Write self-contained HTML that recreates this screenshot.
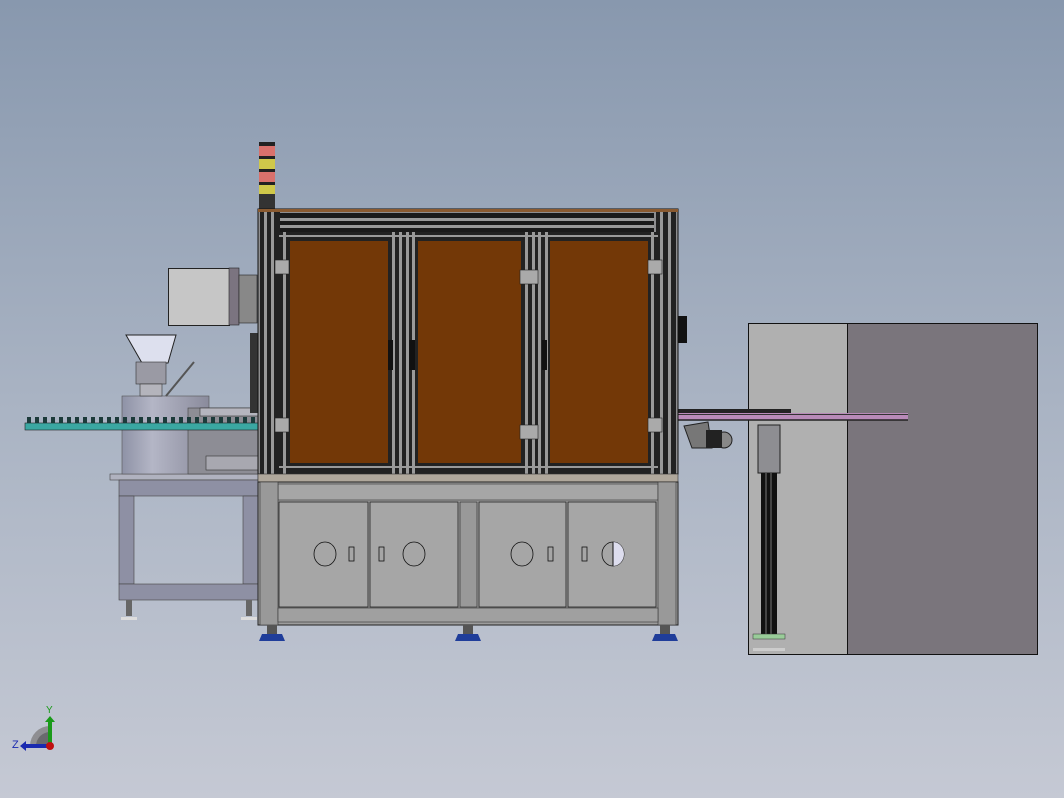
<!DOCTYPE html>
<html><head><meta charset="utf-8"><style>
html,body{margin:0;padding:0;width:1064px;height:798px;overflow:hidden}
body{background:linear-gradient(#8898ae 0%,#a9b3c3 50%,#c5c9d4 100%)}
svg{position:absolute;left:0;top:0}
</style></head><body>
<svg width="1064" height="798" viewBox="0 0 1064 798" xmlns="http://www.w3.org/2000/svg" font-family="Liberation Sans, sans-serif">
<defs>
<linearGradient id="cyl" x1="0" x2="1"><stop offset="0" stop-color="#8e92a6"/><stop offset="0.35" stop-color="#b4b6c6"/><stop offset="1" stop-color="#8a8b9c"/></linearGradient>
</defs>
<!-- RIGHT BOX -->
<rect x="748.5" y="323.5" width="99" height="331" fill="#b0b0b0" stroke="#111"/>
<rect x="847.5" y="323.5" width="190" height="331" fill="#7a757c" stroke="#111"/>
<!-- right column -->
<rect x="758" y="425" width="22" height="48" fill="#8e8e92" stroke="#222"/>
<rect x="761" y="473" width="16" height="163" fill="#111"/>
<line x1="766" y1="473" x2="766" y2="636" stroke="#777"/>
<line x1="771" y1="473" x2="771" y2="636" stroke="#777"/>
<rect x="753" y="634" width="32" height="5" fill="#9c9" stroke="#333" stroke-width="0.5"/>
<rect x="753" y="648" width="32" height="3" fill="#ccc"/>
<!-- right conveyor -->
<rect x="678" y="409" width="113" height="4" fill="#222"/>
<rect x="678" y="413" width="230" height="7" fill="#b88ab8"/>
<line x1="678" y1="420" x2="908" y2="420" stroke="#222" stroke-width="1.5"/>
<g fill="#333"><rect x="678" y="414" width="230" height="1"/></g>
<path d="M684 426 L708 422 L712 448 L692 448 Z" fill="#777" stroke="#222"/>
<circle cx="724" cy="440" r="8" fill="#888" stroke="#222"/>
<rect x="706" y="430" width="16" height="18" fill="#222"/>
<!-- LEFT TABLE -->
<rect x="110" y="474" width="148" height="6" fill="#b0b2bf" stroke="#444" stroke-width="0.6"/>
<rect x="119" y="480" width="139" height="16" fill="#8e90a4" stroke="#444" stroke-width="0.6"/>
<rect x="119" y="496" width="15" height="88" fill="#8e90a4" stroke="#444" stroke-width="0.6"/>
<rect x="243" y="496" width="15" height="88" fill="#8e90a4" stroke="#444" stroke-width="0.6"/>
<rect x="119" y="584" width="139" height="16" fill="#8e90a4" stroke="#444" stroke-width="0.6"/>
<rect x="126" y="600" width="6" height="16" fill="#666"/><rect x="121" y="617" width="16" height="3" fill="#ddd"/>
<rect x="246" y="600" width="6" height="16" fill="#666"/><rect x="241" y="617" width="16" height="3" fill="#ddd"/>
<!-- bowl -->
<rect x="122" y="396" width="87" height="78" fill="url(#cyl)" stroke="#555" stroke-width="0.6"/>
<rect x="188" y="408" width="70" height="66" fill="#8d8d95" stroke="#444" stroke-width="0.6"/>
<rect x="200" y="408" width="58" height="8" fill="#b5b5be" stroke="#333" stroke-width="0.6"/>
<rect x="206" y="456" width="52" height="14" fill="#a8a8b0" stroke="#333" stroke-width="0.6"/>
<!-- hopper -->
<path d="M126 335 L176 335 L168 363 L142 363 Z" fill="#dde0ee" stroke="#222"/>
<rect x="136" y="362" width="30" height="22" fill="#9a9aa4" stroke="#333" stroke-width="0.6"/>
<rect x="140" y="384" width="22" height="12" fill="#b4b4bc" stroke="#333" stroke-width="0.6"/>
<line x1="166" y1="396" x2="194" y2="362" stroke="#555" stroke-width="2"/>
<!-- left conveyor -->
<rect x="25" y="423" width="235" height="7" fill="#3aa7a2" stroke="#222" stroke-width="0.6"/>
<g fill="#1c3a3a">
<rect x="27" y="417" width="4" height="6"/><rect x="35" y="417" width="4" height="6"/><rect x="43" y="417" width="4" height="6"/><rect x="51" y="417" width="4" height="6"/><rect x="59" y="417" width="4" height="6"/><rect x="67" y="417" width="4" height="6"/><rect x="75" y="417" width="4" height="6"/><rect x="83" y="417" width="4" height="6"/><rect x="91" y="417" width="4" height="6"/><rect x="99" y="417" width="4" height="6"/><rect x="107" y="417" width="4" height="6"/><rect x="115" y="417" width="4" height="6"/><rect x="123" y="417" width="4" height="6"/><rect x="131" y="417" width="4" height="6"/><rect x="139" y="417" width="4" height="6"/><rect x="147" y="417" width="4" height="6"/><rect x="155" y="417" width="4" height="6"/><rect x="163" y="417" width="4" height="6"/><rect x="171" y="417" width="4" height="6"/><rect x="179" y="417" width="4" height="6"/><rect x="187" y="417" width="4" height="6"/><rect x="195" y="417" width="4" height="6"/><rect x="203" y="417" width="4" height="6"/><rect x="211" y="417" width="4" height="6"/><rect x="219" y="417" width="4" height="6"/><rect x="227" y="417" width="4" height="6"/><rect x="235" y="417" width="4" height="6"/><rect x="243" y="417" width="4" height="6"/><rect x="251" y="417" width="4" height="6"/>
</g>
<!-- control box -->
<rect x="168.5" y="268.5" width="61" height="57" fill="#c6c6c6" stroke="#222"/>
<rect x="229" y="268" width="10" height="57" fill="#7b7480" stroke="#222" stroke-width="0.6"/>
<rect x="239" y="275" width="18" height="48" fill="#888" stroke="#222" stroke-width="0.6"/>
<rect x="250" y="333" width="8" height="80" fill="#333"/>
<!-- tower light -->
<rect x="259" y="142" width="16" height="4" fill="#222"/>
<rect x="259" y="146" width="16" height="10" fill="#d9716c"/>
<rect x="259" y="156" width="16" height="3" fill="#222"/>
<rect x="259" y="159" width="16" height="10" fill="#cfc84a"/>
<rect x="259" y="169" width="16" height="3" fill="#222"/>
<rect x="259" y="172" width="16" height="10" fill="#d9716c"/>
<rect x="259" y="182" width="16" height="3" fill="#222"/>
<rect x="259" y="185" width="16" height="9" fill="#cfc84a"/>
<rect x="259" y="194" width="16" height="15" fill="#333"/>
<!-- MAIN CABINET upper -->
<rect x="258" y="209" width="420" height="265" fill="#8e8e90" stroke="#111"/>
<rect x="258" y="209" width="420" height="3" fill="#8a5a30"/>
<rect x="278" y="213" width="376" height="20" fill="#1a1a1a"/>
<rect x="278" y="218" width="376" height="3" fill="#999"/><rect x="278" y="225" width="376" height="3" fill="#999"/>
<rect x="260" y="212" width="20" height="262" fill="#222"/>
<rect x="264" y="212" width="3" height="262" fill="#999"/><rect x="271" y="212" width="3" height="262" fill="#999"/>
<rect x="656" y="212" width="20" height="262" fill="#222"/>
<rect x="660" y="212" width="3" height="262" fill="#999"/><rect x="668" y="212" width="3" height="262" fill="#999"/>
<!-- inner frames -->
<g fill="#222">
<rect x="279" y="232" width="11" height="242"/><rect x="388" y="232" width="30" height="242"/><rect x="521" y="232" width="29" height="242"/><rect x="648" y="232" width="10" height="242"/>
<rect x="279" y="463" width="379" height="11"/>
<rect x="279" y="232" width="379" height="9"/>
</g>
<g fill="#9a9a9a">
<rect x="283" y="232" width="3" height="242"/><rect x="392" y="232" width="3" height="242"/><rect x="399" y="232" width="3" height="242"/><rect x="406" y="232" width="3" height="242"/><rect x="412" y="232" width="3" height="242"/>
<rect x="525" y="232" width="3" height="242"/><rect x="532" y="232" width="3" height="242"/><rect x="538" y="232" width="3" height="242"/><rect x="545" y="232" width="3" height="242"/><rect x="651" y="232" width="3" height="242"/>
<rect x="279" y="235" width="379" height="2"/><rect x="279" y="466" width="379" height="2"/>
</g>
<rect x="290" y="241" width="98" height="222" fill="#733807"/>
<rect x="418" y="241" width="103" height="222" fill="#733807"/>
<rect x="550" y="241" width="98" height="222" fill="#733807"/>
<g fill="#111"><rect x="388" y="340" width="5" height="30"/><rect x="409" y="340" width="6" height="30"/><rect x="542" y="340" width="5" height="30"/><rect x="678" y="316" width="9" height="27"/></g>
<g fill="#aaa" stroke="#222" stroke-width="0.6">
<rect x="275" y="260" width="14" height="14"/><rect x="275" y="418" width="14" height="14"/><rect x="520" y="270" width="18" height="14"/><rect x="520" y="425" width="18" height="14"/><rect x="648" y="260" width="14" height="14"/><rect x="648" y="418" width="14" height="14"/>
</g>
<!-- LOWER CABINET -->
<rect x="258" y="474" width="420" height="8" fill="#bca"/>
<rect x="258" y="474" width="420" height="8" fill="#b0a89c" stroke="#333" stroke-width="0.6"/>
<rect x="258" y="482" width="420" height="143" fill="#9c9c9c" stroke="#222"/>
<rect x="278" y="484" width="380" height="16" fill="#a6a6a6" stroke="#333" stroke-width="0.6"/>
<rect x="260" y="482" width="18" height="143" fill="#999" stroke="#333" stroke-width="0.6"/>
<rect x="658" y="482" width="18" height="143" fill="#999" stroke="#333" stroke-width="0.6"/>
<rect x="278" y="608" width="380" height="14" fill="#a0a0a0" stroke="#333" stroke-width="0.6"/>
<g fill="#a6a6a6" stroke="#222" stroke-width="0.8">
<rect x="279" y="502" width="89" height="105"/><rect x="370" y="502" width="88" height="105"/><rect x="479" y="502" width="87" height="105"/><rect x="568" y="502" width="88" height="105"/>
</g>
<rect x="460" y="502" width="17" height="105" fill="#999" stroke="#222" stroke-width="0.6"/>
<g fill="none" stroke="#111" stroke-width="0.8">
<ellipse cx="325" cy="554" rx="11" ry="12"/><rect x="349" y="547" width="5" height="14"/>
<rect x="379" y="547" width="5" height="14"/><ellipse cx="414" cy="554" rx="11" ry="12"/>
<ellipse cx="522" cy="554" rx="11" ry="12"/><rect x="548" y="547" width="5" height="14"/>
<rect x="582" y="547" width="5" height="14"/><ellipse cx="613" cy="554" rx="11" ry="12"/>
</g>
<path d="M613 542 A11 12 0 0 1 613 566 Z" fill="#dde"/>
<line x1="613" y1="542" x2="613" y2="566" stroke="#111"/>
<!-- feet -->
<g fill="#1f3d9a"><path d="M259 641 L285 641 L282 634 L262 634 Z"/><path d="M455 641 L481 641 L478 634 L458 634 Z"/><path d="M652 641 L678 641 L675 634 L655 634 Z"/></g>
<g fill="#555"><rect x="267" y="625" width="10" height="9"/><rect x="463" y="625" width="10" height="9"/><rect x="660" y="625" width="10" height="9"/></g>
<!-- axis triad -->
<path d="M30 746 A20 20 0 0 1 50 726 L50 746 Z" fill="#8e8e92"/>
<path d="M36 746 A14 14 0 0 1 50 732 L50 746 Z" fill="#6a6a6e"/>
<rect x="48" y="722" width="4" height="24" fill="#1a9a1a"/><path d="M45 722 L50 716 L55 722 Z" fill="#1a9a1a"/>
<rect x="26" y="744" width="24" height="4" fill="#1a2ab0"/><path d="M26 741 L20 746 L26 751 Z" fill="#1a2ab0"/>
<circle cx="50" cy="746" r="4" fill="#c01010"/>
<text x="46" y="713" font-size="10" fill="#1a9a1a">Y</text>
<text x="12" y="748" font-size="11" fill="#1a2ab0">Z</text>
</svg>
</body></html>
